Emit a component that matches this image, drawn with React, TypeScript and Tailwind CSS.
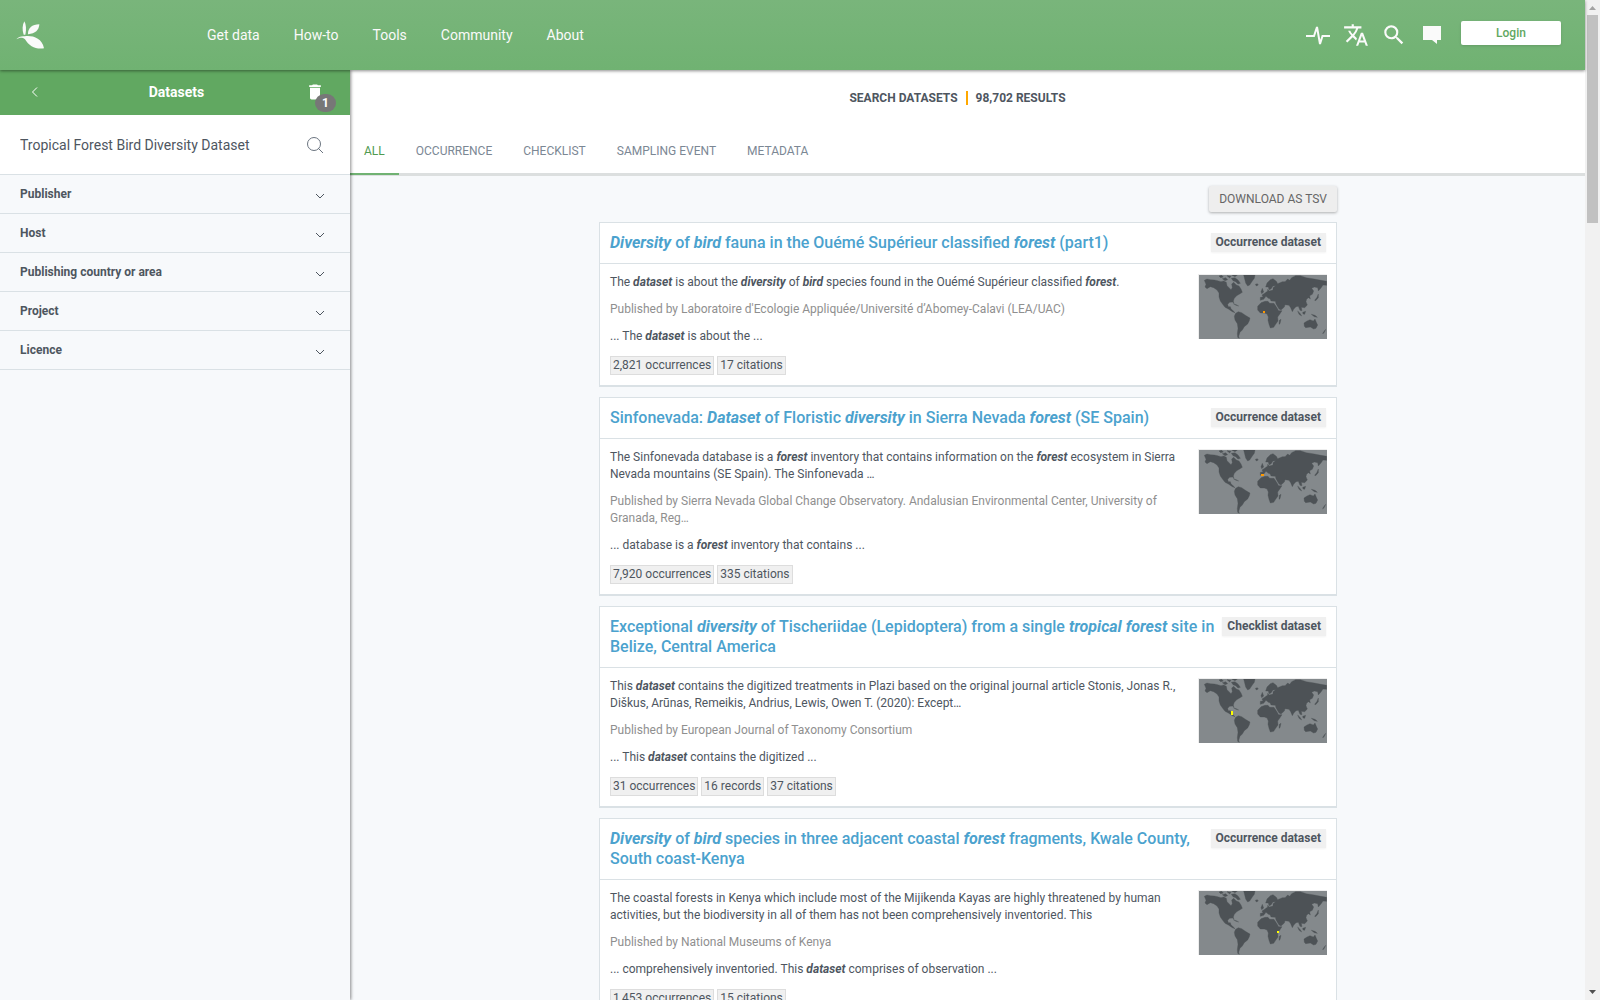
import React, { Fragment, useState } from 'react';
import { MdTranslate, MdSearch, MdDelete } from 'react-icons/md';

interface Dataset {
    title: string;
    type: string;
    description: string;
    publisher: string;
    snippet: string;
    counts: string[];
    points: { x: number; y: number; w: number; h: number; color: string }[];
}

// words between asterisks are search hits
const datasets: Dataset[] = [
    {
        title: '*Diversity* of *bird* fauna in the Ouémé Supérieur classified *forest* (part1)',
        type: 'Occurrence dataset',
        description: 'The *dataset* is about the *diversity* of *bird* species found in the Ouémé Supérieur classified *forest*.',
        publisher: "Laboratoire d'Ecologie Appliquée/Université d’Abomey-Calavi (LEA/UAC)",
        snippet: '... The *dataset* is about the ...',
        counts: ['2,821 occurrences', '17 citations'],
        points: [{ x: 192, y: 108, w: 6, h: 6, color: '#ff9800' }],
    },
    {
        title: 'Sinfonevada: *Dataset* of Floristic *diversity* in Sierra Nevada *forest* (SE Spain)',
        type: 'Occurrence dataset',
        description: 'The Sinfonevada database is a *forest* inventory that contains information on the *forest* ecosystem in Sierra Nevada mountains (SE Spain). The Sinfonevada …',
        publisher: 'Sierra Nevada Global Change Observatory. Andalusian Environmental Center, University of Granada, Reg…',
        snippet: '... database is a *forest* inventory that contains ...',
        counts: ['7,920 occurrences', '335 citations'],
        points: [{ x: 186, y: 72, w: 9, h: 6, color: '#ff9800' }],
    },
    {
        title: 'Exceptional *diversity* of Tischeriidae (Lepidoptera) from a single *tropical* *forest* site in Belize, Central America',
        type: 'Checklist dataset',
        description: 'This *dataset* contains the digitized treatments in Plazi based on the original journal article Stonis, Jonas R., Diškus, Arūnas, Remeikis, Andrius, Lewis, Owen T. (2020): Except…',
        publisher: 'European Journal of Taxonomy Consortium',
        snippet: '... This *dataset* contains the digitized ...',
        counts: ['31 occurrences', '16 records', '37 citations'],
        points: [{ x: 96, y: 96, w: 6, h: 12, color: '#ffff00' }],
    },
    {
        title: '*Diversity* of *bird* species in three adjacent coastal *forest* fragments, Kwale County, South coast-Kenya',
        type: 'Occurrence dataset',
        description: 'The coastal forests in Kenya which include most of the Mijikenda Kayas are highly threatened by human activities, but the biodiversity in all of them has not been comprehensively inventoried. This',
        publisher: 'National Museums of Kenya',
        snippet: '... comprehensively inventoried. This *dataset* comprises of observation ...',
        counts: ['1,453 occurrences', '15 citations'],
        points: [{ x: 234, y: 120, w: 6, h: 6, color: '#ffff00' }],
    },
];

const land = [
    // north america
    'M16 16 L24 12 L34 14 L46 15 L56 17 L66 20 L74 18 L82 22 L84 32 L90 38 L96 44 L100 38 L98 27 L104 22 L112 30 L120 33 L126 42 L130 52 L122 57 L113 62 L106 70 L103 78 L105 86 L101 81 L92 82 L86 88 L88 95 L94 95 L96 101 L103 108 L108 113 L100 110 L88 102 L78 97 L71 88 L64 78 L60 66 L60 54 L54 45 L44 38 L34 35 L24 41 L18 36 L21 28 Z',
    'M60 3 L68 1 L73 6 L65 8 Z',
    'M70 11 L80 8 L86 14 L78 17 Z',
    'M84 2 L96 4 L92 9 Z',
    'M97 10 L108 8 L117 15 L124 25 L117 27 L110 20 L102 17 Z',
    'M98 0 L115 0 L108 5 Z',
    'M134 0 L168 0 L166 10 L160 18 L152 30 L146 33 L140 24 L137 12 Z',
    'M169 28 L175 26 L178 30 L172 33 Z',
    'M104 87 L112 89 L119 93 L111 91 Z',
    // south america
    'M110 115 L118 110 L128 113 L138 120 L144 124 L153 129 L151 137 L146 147 L136 155 L130 165 L123 172 L119 184 L121 190 L116 187 L115 176 L117 160 L115 146 L108 135 L106 124 Z',
    // europe and asia
    'M184 76 L184 67 L192 66 L189 60 L198 54 L206 48 L206 43 L211 48 L222 45 L222 38 L230 32 L222 33 L216 42 L210 44 L208 36 L200 36 L204 24 L214 14 L222 11 L232 19 L236 26 L250 20 L258 20 L266 12 L272 16 L278 8 L290 2 L304 2 L322 8 L346 12 L366 16 L383 19 L383 31 L372 30 L366 39 L358 48 L356 38 L346 36 L338 40 L344 48 L340 58 L332 62 L334 72 L329 68 L323 72 L321 80 L325 90 L317 98 L307 97 L309 107 L303 106 L298 94 L291 95 L284 103 L280 110 L275 98 L270 91 L258 89 L256 96 L246 105 L240 102 L231 87 L229 79 L216 78 L213 71 L208 70 L201 64 L194 73 Z',
    // africa
    'M186 83 L198 79 L207 79 L212 85 L225 85 L233 97 L239 107 L249 107 L242 118 L236 126 L237 138 L230 148 L224 157 L214 159 L210 148 L207 136 L208 126 L204 117 L196 114 L184 114 L176 105 L176 94 Z',
    'M241 136 L246 133 L243 146 L240 148 Z',
    'M186 50 L190 40 L194 51 L188 56 Z',
    // oceania
    'M315 144 L324 138 L333 134 L343 138 L348 132 L352 142 L356 150 L351 160 L344 162 L334 156 L320 158 L316 154 Z',
    'M296 108 L304 116 L308 123 L300 118 Z',
    'M311 112 L320 109 L317 118 L312 117 Z',
    'M337 118 L348 121 L355 127 L346 125 Z',
    'M347 76 L354 67 L358 57 L358 68 L350 77 Z',
    'M373 172 L380 163 L376 172 L371 177 Z',
];

const Marked = ({ text }: { text: string }) => (
    <>
        {text.split('*').map((part, i) =>
            i % 2 ? <em key={i} className="font-bold">{part}</em> : <Fragment key={i}>{part}</Fragment>
        )}
    </>
);

const WorldMap = ({ points }: { points: Dataset['points'] }) => (
    <svg viewBox="0 0 384 192" className="block w-32 h-16 bg-[#84898c]" aria-label="Map of occurrences">
        <path d={land.join(' ')} fill="#4d5256" stroke="#4d5256" />
        {points.map((p, i) => (
            <rect key={i} x={p.x} y={p.y} width={p.w} height={p.h} fill={p.color} />
        ))}
    </svg>
);

const Logo = () => (
    <svg viewBox="18 22 84 84" className="size-7" fill="#fafafa">
        <path d="M43 23 C48 32 50 46 46 63 L41 63 C36 48 37 34 43 23 Z" />
        <path d="M88 32 C87 50 76 60 54 62 C53 44 66 32 88 32 Z" />
        <path d="M19 77 C25 70 33 67 44 68 C66 65 96 72 102 104 C78 108 57 98 45 77 C36 70 28 72 19 77 Z" />
    </svg>
);

const Chevron = ({ className, d }: { className: string; d: string }) => (
    <svg viewBox="0 0 10 10" className={className} fill="none" stroke="currentColor">
        <path d={d} />
    </svg>
);

const Header = () => (
    <header className="relative z-20 flex h-[70px] shrink-0 items-center bg-linear-to-b from-[#79b57b] to-[#70b272] pl-4 pr-6 shadow-[0_1px_3px_rgba(0,0,0,0.45)]">
        <a href="#home" aria-label="Home" className="w-[191px]">
            <Logo />
        </a>
        <nav className="flex flex-1 gap-[34px] text-sm text-[#fafafa]">
            {['Get data', 'How-to', 'Tools', 'Community', 'About'].map(item => (
                <a key={item} href={`#${item}`}>{item}</a>
            ))}
        </nav>
        <div className="flex items-center gap-3 text-[#fafafa]">
            <button aria-label="Health">
                <svg viewBox="0 0 26 24" className="block w-[26px] h-6" fill="none" stroke="currentColor" strokeWidth="2">
                    <path d="M1 13 H9 L12 4 L15 21 L17.500 13 H25" />
                </svg>
            </button>
            <button aria-label="Language"><MdTranslate size={26} /></button>
            <button aria-label="Search"><MdSearch size={26} /></button>
            <button aria-label="Feedback" className="mx-1">
                <svg viewBox="0 0 18 18" className="block size-[18px]" fill="currentColor">
                    <path d="M0 0 H18 V14 H14 V18 L9 14 H0 Z" />
                </svg>
            </button>
            <button className="ml-1 mb-1 w-[100px] h-6 rounded-xs bg-white text-xs font-medium text-[#61a861] shadow-sm">Login</button>
        </div>
    </header>
);

const Sidebar = () => {
    const [query, setQuery] = useState('Tropical Forest Bird Diversity Dataset');

    return (
        <aside className="relative z-10 w-[350px] shrink-0 bg-[#f7f9fb] shadow-[1px_0_3px_rgba(0,0,0,0.45)]">
            <div className="flex h-[45px] items-center justify-between bg-[#61a861] pl-[30px] pr-[25px] pb-[2px] text-white">
                <button aria-label="Back" className="w-[18px]">
                    <Chevron className="size-[10px]" d="M7 0.500 L2.500 5 L7 9.500" />
                </button>
                <h2 className="text-sm font-bold">Datasets</h2>
                <button aria-label="Clear filters" className="relative">
                    <MdDelete size={20} />
                    <span className="absolute left-[10px] top-3 rounded-full bg-[#777] px-[7px] text-xs leading-[18px] font-bold">1</span>
                </button>
            </div>
            <div className="flex h-[60px] items-center border-b border-[#dae1e5] bg-white pl-5 pr-[26px]">
                <input
                    aria-label="Search datasets"
                    className="flex-1 text-sm text-[#4e565f] outline-none"
                    value={query}
                    onChange={e => setQuery(e.target.value)}
                />
                <svg viewBox="0 0 18 18" className="size-[18px]" fill="none" stroke="#6b7480">
                    <circle cx="8" cy="8" r="6.500" />
                    <path d="M12 12 L17 17" />
                </svg>
            </div>
            {['Publisher', 'Host', 'Publishing country or area', 'Project', 'Licence'].map(filter => (
                <button
                    key={filter}
                    className="flex w-full h-[39px] items-center justify-between border-b border-[#dae1e5] pl-5 pr-[25px] pb-px text-xs font-bold text-[#4e565f]"
                >
                    {filter}
                    <Chevron className="mt-1 size-[10px]" d="M1 3 L5 7 L9 3" />
                </button>
            ))}
        </aside>
    );
};

const tabs = ['ALL', 'OCCURRENCE', 'CHECKLIST', 'SAMPLING EVENT', 'METADATA'];

const DatasetCard = ({ dataset }: { dataset: Dataset }) => (
    <article className="border border-b-2 border-[#dae1e5] bg-white">
        <div className="flex items-start justify-between gap-1 border-b border-[#dae1e5] p-[10px]">
            <h3 className="text-base leading-5 font-medium text-[#4ba2ce]">
                <a href="#dataset"><Marked text={dataset.title} /></a>
            </h3>
            <span className="shrink-0 bg-[#f0f0f0] px-[5px] text-xs leading-[19px] font-bold shadow-xs">{dataset.type}</span>
        </div>
        <div className="flex gap-[10px] p-[10px]">
            <div className="flex-1 text-xs leading-[17px]">
                <p><Marked text={dataset.description} /></p>
                <p className="mt-[10px] text-[#8f8f8f]">Published by {dataset.publisher}</p>
                <p className="mt-[10px]"><Marked text={dataset.snippet} /></p>
                <div className="mt-[11px] flex gap-[3px]">
                    {dataset.counts.map(count => (
                        <a key={count} href="#stats" className="border border-[#ddd] bg-[#f0f0f0] px-[2px]">{count}</a>
                    ))}
                </div>
            </div>
            <div className="-mr-px self-start border-l border-t border-[#eee]">
                <WorldMap points={dataset.points} />
            </div>
        </div>
    </article>
);

const Results = () => {
    const [active, setActive] = useState('ALL');

    return (
        <main className="flex-1 bg-[#f7f9fb]">
            <div className="border-b-3 border-[#dcdfdf] bg-white">
                <h1 className="flex h-14 items-center justify-center gap-2 pr-5 text-xs font-bold">
                    SEARCH DATASETS
                    <span className="h-[14px] w-[2px] bg-[#ffa800]" />
                    98,702 RESULTS
                </h1>
                <div className="flex h-[47px] gap-[3px]">
                    {tabs.map(tab => (
                        <button
                            key={tab}
                            onClick={() => setActive(tab)}
                            className={`-mb-[2px] px-[14px] pt-[2px] text-xs border-b-2 ${active === tab ? 'border-[#70b272] text-[#4f9a50]' : 'border-transparent text-[#7b8794]'}`}
                        >
                            {tab}
                        </button>
                    ))}
                </div>
            </div>
            <div className="pl-px pt-[10px]">
                <div className="mx-auto max-w-[738px]">
                    <div className="mb-[10px] flex justify-end">
                        <button className="h-[26px] rounded-xs bg-[#eee] px-[10px] text-xs text-[#666] shadow-[0_1px_3px_rgba(0,0,0,0.3)]">DOWNLOAD AS TSV</button>
                    </div>
                    <div className="flex flex-col gap-[10px]">
                        {datasets.map(dataset => (
                            <DatasetCard key={dataset.title} dataset={dataset} />
                        ))}
                    </div>
                </div>
            </div>
        </main>
    );
};

const Scrollbar = () => (
    <div className="flex w-[15px] shrink-0 flex-col items-center bg-[#f1f1f1]">
        <svg viewBox="0 0 15 15" className="size-[15px]" fill="#a3a3a3">
            <path d="M4 10 L7.500 6 L11 10 Z" />
        </svg>
        <div className="h-[208px] w-[11px] bg-[#c1c1c1]" />
        <svg viewBox="0 0 15 15" className="mt-auto size-[15px]" fill="#505050">
            <path d="M4 5 L7.500 9 L11 5 Z" />
        </svg>
    </div>
);

export default function App() {
    return (
        <div className="flex h-screen overflow-hidden font-[Roboto,sans-serif] text-[#4e565f]">
            <div className="flex min-w-0 flex-1 flex-col">
                <Header />
                <div className="flex min-h-0 flex-1">
                    <Sidebar />
                    <Results />
                </div>
            </div>
            <Scrollbar />
        </div>
    );
}
